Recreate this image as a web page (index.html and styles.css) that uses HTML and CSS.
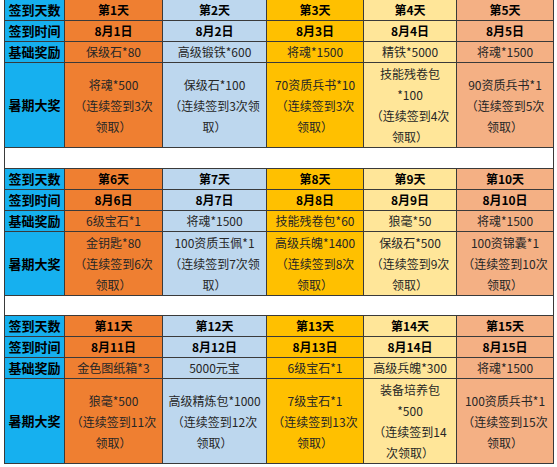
FILE: index.html
```html
<!DOCTYPE html>
<html lang="zh">
<head>
<meta charset="utf-8">
<link rel="stylesheet" href="styles.css">
</head>
<body>
<table class="sheet">
  <colgroup>
    <col class="c-label"><col class="c1"><col class="c2"><col class="c3"><col class="c4"><col class="c5">
  </colgroup>
  <tbody>
    <tr class="r-day r-first">
      <td class="label">签到天数</td>
      <td class="d1 b">第1天</td><td class="d2 b">第2天</td><td class="d3 b">第3天</td><td class="d4 b">第4天</td><td class="d5 b">第5天</td>
    </tr>
    <tr class="r-date">
      <td class="label">签到时间</td>
      <td class="d1 b">8月1日</td><td class="d2 b">8月2日</td><td class="d3 b">8月3日</td><td class="d4 b">8月4日</td><td class="d5 b">8月5日</td>
    </tr>
    <tr class="r-base">
      <td class="label">基础奖励</td>
      <td class="d1">保级石*80</td><td class="d2">高级锻铁*600</td><td class="d3">将魂*1500</td><td class="d4">精铁*5000</td><td class="d5">将魂*1500</td>
    </tr>
    <tr class="r-big r-big4">
      <td class="label">暑期大奖</td>
      <td class="d1 multi">将魂*500<br>（连续签到3次<br>领取）</td>
      <td class="d2 multi">保级石*100<br>（连续签到3次领<br>取）</td>
      <td class="d3 multi">70资质兵书*10<br>（连续签到3次<br>领取）</td>
      <td class="d4 multi">技能残卷包<br>*100<br>（连续签到4次<br>领取）</td>
      <td class="d5 multi">90资质兵书*1<br>（连续签到5次<br>领取）</td>
    </tr>
    <tr class="r-gap"><td colspan="6"></td></tr>
    <tr class="r-day">
      <td class="label">签到天数</td>
      <td class="d1 b">第6天</td><td class="d2 b">第7天</td><td class="d3 b">第8天</td><td class="d4 b">第9天</td><td class="d5 b">第10天</td>
    </tr>
    <tr class="r-date">
      <td class="label">签到时间</td>
      <td class="d1 b">8月6日</td><td class="d2 b">8月7日</td><td class="d3 b">8月8日</td><td class="d4 b">8月9日</td><td class="d5 b">8月10日</td>
    </tr>
    <tr class="r-base">
      <td class="label">基础奖励</td>
      <td class="d1">6级宝石*1</td><td class="d2">将魂*1500</td><td class="d3">技能残卷包*60</td><td class="d4">狼毫*50</td><td class="d5">将魂*1500</td>
    </tr>
    <tr class="r-big r-big3">
      <td class="label">暑期大奖</td>
      <td class="d1 multi">金钥匙*80<br>（连续签到6次<br>领取）</td>
      <td class="d2 multi">100资质玉佩*1<br>（连续签到7次领<br>取）</td>
      <td class="d3 multi">高级兵魄*1400<br>（连续签到8次<br>领取）</td>
      <td class="d4 multi">保级石*500<br>（连续签到9次<br>领取）</td>
      <td class="d5 multi">100资锦囊*1<br>（连续签到10次<br>领取）</td>
    </tr>
    <tr class="r-gap r-gap-short"><td colspan="6"></td></tr>
    <tr class="r-day">
      <td class="label">签到天数</td>
      <td class="d1 b">第11天</td><td class="d2 b">第12天</td><td class="d3 b">第13天</td><td class="d4 b">第14天</td><td class="d5 b">第15天</td>
    </tr>
    <tr class="r-date">
      <td class="label">签到时间</td>
      <td class="d1 b">8月11日</td><td class="d2 b">8月12日</td><td class="d3 b">8月13日</td><td class="d4 b">8月14日</td><td class="d5 b">8月15日</td>
    </tr>
    <tr class="r-base">
      <td class="label">基础奖励</td>
      <td class="d1">金色图纸箱*3</td><td class="d2">5000元宝</td><td class="d3">6级宝石*1</td><td class="d4">高级兵魄*300</td><td class="d5">将魂*1500</td>
    </tr>
    <tr class="r-big r-big4 r-last">
      <td class="label">暑期大奖</td>
      <td class="d1 multi">狼毫*500<br>（连续签到11次<br>领取）</td>
      <td class="d2 multi">高级精炼包*1000<br>（连续签到12次<br>领取）</td>
      <td class="d3 multi">7级宝石*1<br>（连续签到13次<br>领取）</td>
      <td class="d4 multi">装备培养包<br>*500<br>（连续签到14<br>次领取）</td>
      <td class="d5 multi">100资质兵书*1<br>（连续签到15次<br>领取）</td>
    </tr>
  </tbody>
</table>
</body>
</html>
```
FILE: styles.css
```css
html, body {
  margin: 0;
  padding: 0;
  background: #ffffff;
}

body {
  font-family: "Noto Sans CJK SC", "Microsoft YaHei", sans-serif;
  font-size: 12px;
  color: #262626;
}

.sheet {
  margin: -1px 0 0 4px;
  border-collapse: collapse;
  table-layout: fixed;
  width: 549px;
}

.c-label { width: 60px; }
.c1 { width: 98px; }
.c2 { width: 104px; }
.c3 { width: 97px; }
.c4 { width: 93px; }
.c5 { width: 97px; }

.sheet td {
  border: 1px solid #3a3a3a;
  padding: 0;
  text-align: center;
  vertical-align: middle;
  white-space: nowrap;
  overflow: hidden;
  line-height: 16px;
}

.label {
  background: #16b0ef;
  color: #000;
  font-weight: bold;
  font-size: 13px;
}

.b {
  font-weight: bold;
  color: #000;
}

.d1 { background: #ef7f31; }
.d2 { background: #bdd7ee; }
.d3 { background: #ffc000; }
.d4 { background: #ffe699; }
.d5 { background: #f4b084; }

.r-first td { height: 23px; }
.r-day td { height: 20px; }
.r-date td { height: 20px; }
.r-base td { height: 20px; }

.r-big .multi { line-height: 21px; }
.r-big4 td { height: 82px; }
.r-big3 td { height: 63px; }
.r-last td { height: 81px; }

.r-gap td {
  height: 20px;
  background: #ffffff;
}

.r-gap-short td { height: 19px; }
```
